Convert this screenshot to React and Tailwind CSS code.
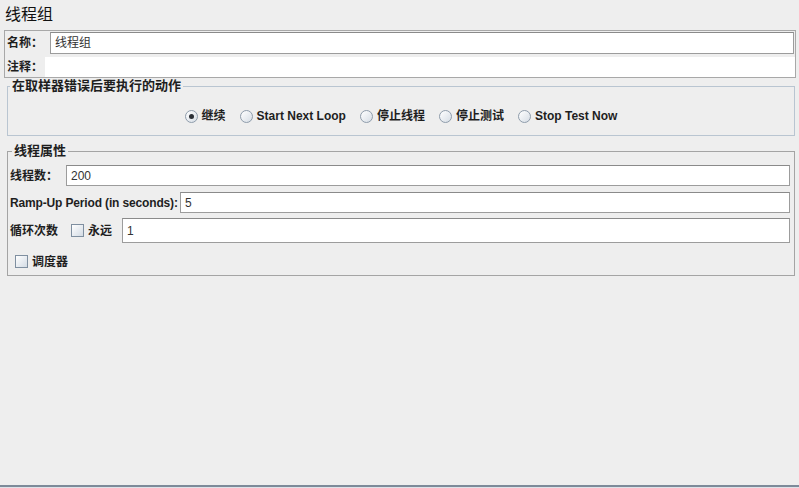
const Radio = ({ checked, label }) => (
  <label className="flex items-center gap-[4px]">
    <span className="w-[13px] h-[13px] rounded-full border border-[#8e9cab] bg-linear-to-br from-white to-[#d6dde5] flex items-center justify-center">
      {checked && <span className="w-[5px] h-[5px] rounded-full bg-[#2a2f36]" />}
    </span>
    <span>{label}</span>
  </label>
)

const Checkbox = () => (
  <span className="shrink-0 w-[13px] h-[13px] border border-[#7f8fa0] bg-linear-to-br from-white to-[#d3dbe4]" />
)

const Field = ({ value, className = '' }) => (
  <div
    className={`flex-1 min-w-0 flex items-center bg-white border border-[#9c9c9c] border-t-[#8a8a8a] pl-[4px] text-[#333] font-normal ${className}`}
  >
    {value}
  </div>
)

const App = () => {
  return (
    <div className="w-[799px] h-[488px] bg-[#eeeeee] flex flex-col text-[12px] leading-[14px] text-[#1e1e1e] font-bold font-['Liberation_Sans','Noto_Sans_CJK_SC',sans-serif]">
      {/* Title */}
      <div className="h-[30px] pl-[5px] flex items-center text-[16px] font-normal text-[#111]">
        线程组
      </div>

      {/* Name / comment */}
      <div className="ml-[4px] mr-[3px] border border-[#a8a8a8] pt-[1px]">
        <div className="flex items-center h-[22px]">
          <span className="shrink-0 w-[45px] pl-[2px] whitespace-nowrap">名称：</span>
          <Field value="线程组" className="h-[22px] mr-[1px] text-[#111]" />
        </div>
        <div className="flex items-center h-[20px] mt-[3px]">
          <span className="shrink-0 w-[40px] pl-[2px] whitespace-nowrap">注释：</span>
          <div className="flex-1 h-full bg-white" />
        </div>
      </div>

      {/* On sampler error */}
      <fieldset className="ml-[7px] mr-[4px] border border-[#b9c5d1] pt-[15px] pb-[12px]">
        <legend className="ml-[2px] px-[2px] text-[13px] leading-[16px]">在取样器错误后要执行的动作</legend>
        <div className="flex justify-center items-center gap-[14px] h-[14px]">
          <Radio checked label="继续" />
          <Radio label="Start Next Loop" />
          <Radio label="停止线程" />
          <Radio label="停止测试" />
          <Radio label="Stop Test Now" />
        </div>
      </fieldset>

      {/* Thread properties */}
      <fieldset className="mt-[7px] ml-[7px] mr-[4px] border border-[#a4a4a4] pl-[2px] pr-[4px] pt-[6px] pb-[7px]">
        <legend className="ml-[2px] px-[2px] text-[13px] leading-[16px]">线程属性</legend>
        <div className="flex items-center h-[21px]">
          <span className="shrink-0 w-[56px] whitespace-nowrap">线程数：</span>
          <Field value="200" className="h-[21px]" />
        </div>
        <div className="flex items-center h-[21px] mt-[6px]">
          <span className="shrink-0 w-[170px] whitespace-nowrap tracking-[-0.15px]">Ramp-Up Period (in seconds):</span>
          <Field value="5" className="h-[21px]" />
        </div>
        <div className="flex items-center h-[25px] mt-[5px]">
          <span className="shrink-0 w-[61px] whitespace-nowrap">循环次数</span>
          <Checkbox />
          <span className="shrink-0 ml-[4px] w-[34px] whitespace-nowrap">永远</span>
          <Field value="1" className="h-[25px]" />
        </div>
        <div className="flex items-center gap-[4px] mt-[12px] ml-[5px] h-[13px]">
          <Checkbox />
          <span>调度器</span>
        </div>
      </fieldset>

      <div className="flex-1" />
      <div className="h-[2px] bg-[#7d8a99]" />
      <div className="h-[1px] bg-[#dde2e8]" />
    </div>
  )
}

export default App
